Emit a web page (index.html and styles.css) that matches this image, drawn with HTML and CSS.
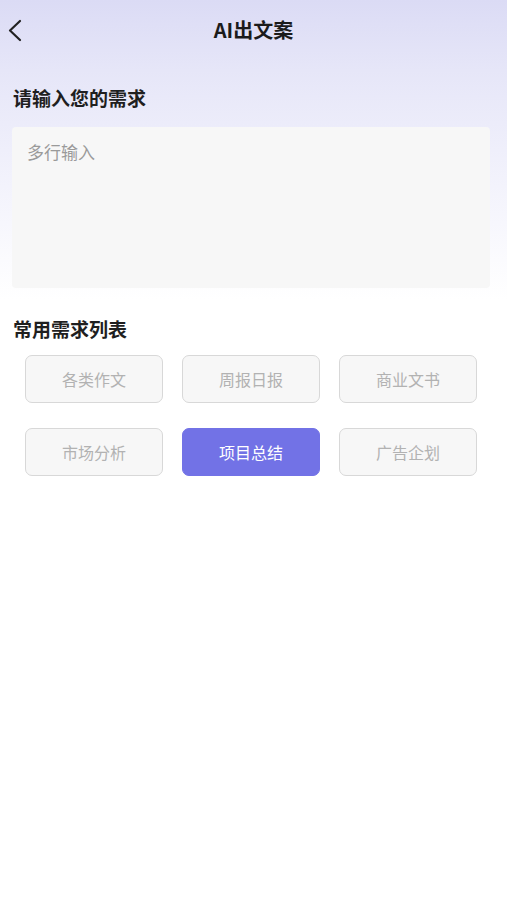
FILE: index.html
```html
<!DOCTYPE html>
<html lang="zh-CN">
<head>
  <meta charset="utf-8" />
  <title>AI出文案</title>
  <meta name="viewport" content="width=device-width, initial-scale=1">
  <link rel="stylesheet" href="styles.css">
</head>
<body>

<div class="page">

  <div class="topbar">
    <a class="back" href="#">
      <svg width="24" height="24" viewBox="0 0 24 24">
        <polyline points="16,3 6,12.5 16,22" fill="none" stroke="#222" stroke-width="2.2" stroke-linecap="round" stroke-linejoin="round"/>
      </svg>
    </a>
    <div class="title">AI出文案</div>
    <div></div>
  </div>

  <div class="label label-first">请输入您的需求</div>
  <textarea class="input-box" placeholder="多行输入"></textarea>

  <div class="label label-second">常用需求列表</div>
  <div class="chips">
    <button class="chip">各类作文</button>
    <button class="chip">周报日报</button>
    <button class="chip">商业文书</button>
    <button class="chip">市场分析</button>
    <button class="chip chip-active">项目总结</button>
    <button class="chip">广告企划</button>
  </div>

</div>

</body>
</html>
```

FILE: styles.css
```css
body {
  margin: 0;
  font-family: "Noto Sans CJK SC", "Noto Sans", sans-serif;
  background: #fff;
}

.page {
  min-height: 900px;
  background: linear-gradient(#dbdbf5 0px, #e6e6f8 70px, #efeffb 150px, #fbfbfe 260px, #ffffff 300px);
}

.topbar {
  height: 58px;
  display: grid;
  grid-template-columns: 1fr auto 1fr;
  align-items: center;
}

.back {
  display: flex;
  align-items: center;
  padding-left: 4px;
  padding-top: 2px;
}

.title {
  font-size: 20px;
  font-weight: 700;
  color: #1b1b1b;
  margin-left: 0px;
  padding-top: 1px;
}

.label {
  font-size: 19px;
  font-weight: 700;
  color: #1f1f1f;
  line-height: 26px;
  padding-left: 13px;
}

.label-first {
  margin-top: 27px;
}

.label-second {
  margin-top: 28px;
}

.input-box {
  display: block;
  box-sizing: border-box;
  margin: 16px 0 0 12px;
  width: 478px;
  height: 161px;
  padding: 13px 15px;
  border: none;
  border-radius: 4px;
  background: #f7f7f7;
  resize: none;
  font-family: "Noto Sans CJK SC", "Noto Sans", sans-serif;
  font-size: 17px;
  line-height: 24px;
  color: #333;
  outline: none;
}

.input-box::placeholder {
  color: #9a9a9a;
}

.chips {
  display: grid;
  grid-template-columns: repeat(3, 138px);
  column-gap: 19px;
  row-gap: 25px;
  padding-left: 25px;
  margin-top: 13px;
}

.chip {
  height: 48px;
  box-sizing: border-box;
  border: 1px solid #d8d8d8;
  border-radius: 7px;
  background: #f7f7f7;
  color: #b2b2b2;
  font-family: "Noto Sans CJK SC", "Noto Sans", sans-serif;
  font-size: 16px;
  padding: 0;
}

.chip-active {
  background: #7272e6;
  border-color: #7272e6;
  color: #fff;
}
```
